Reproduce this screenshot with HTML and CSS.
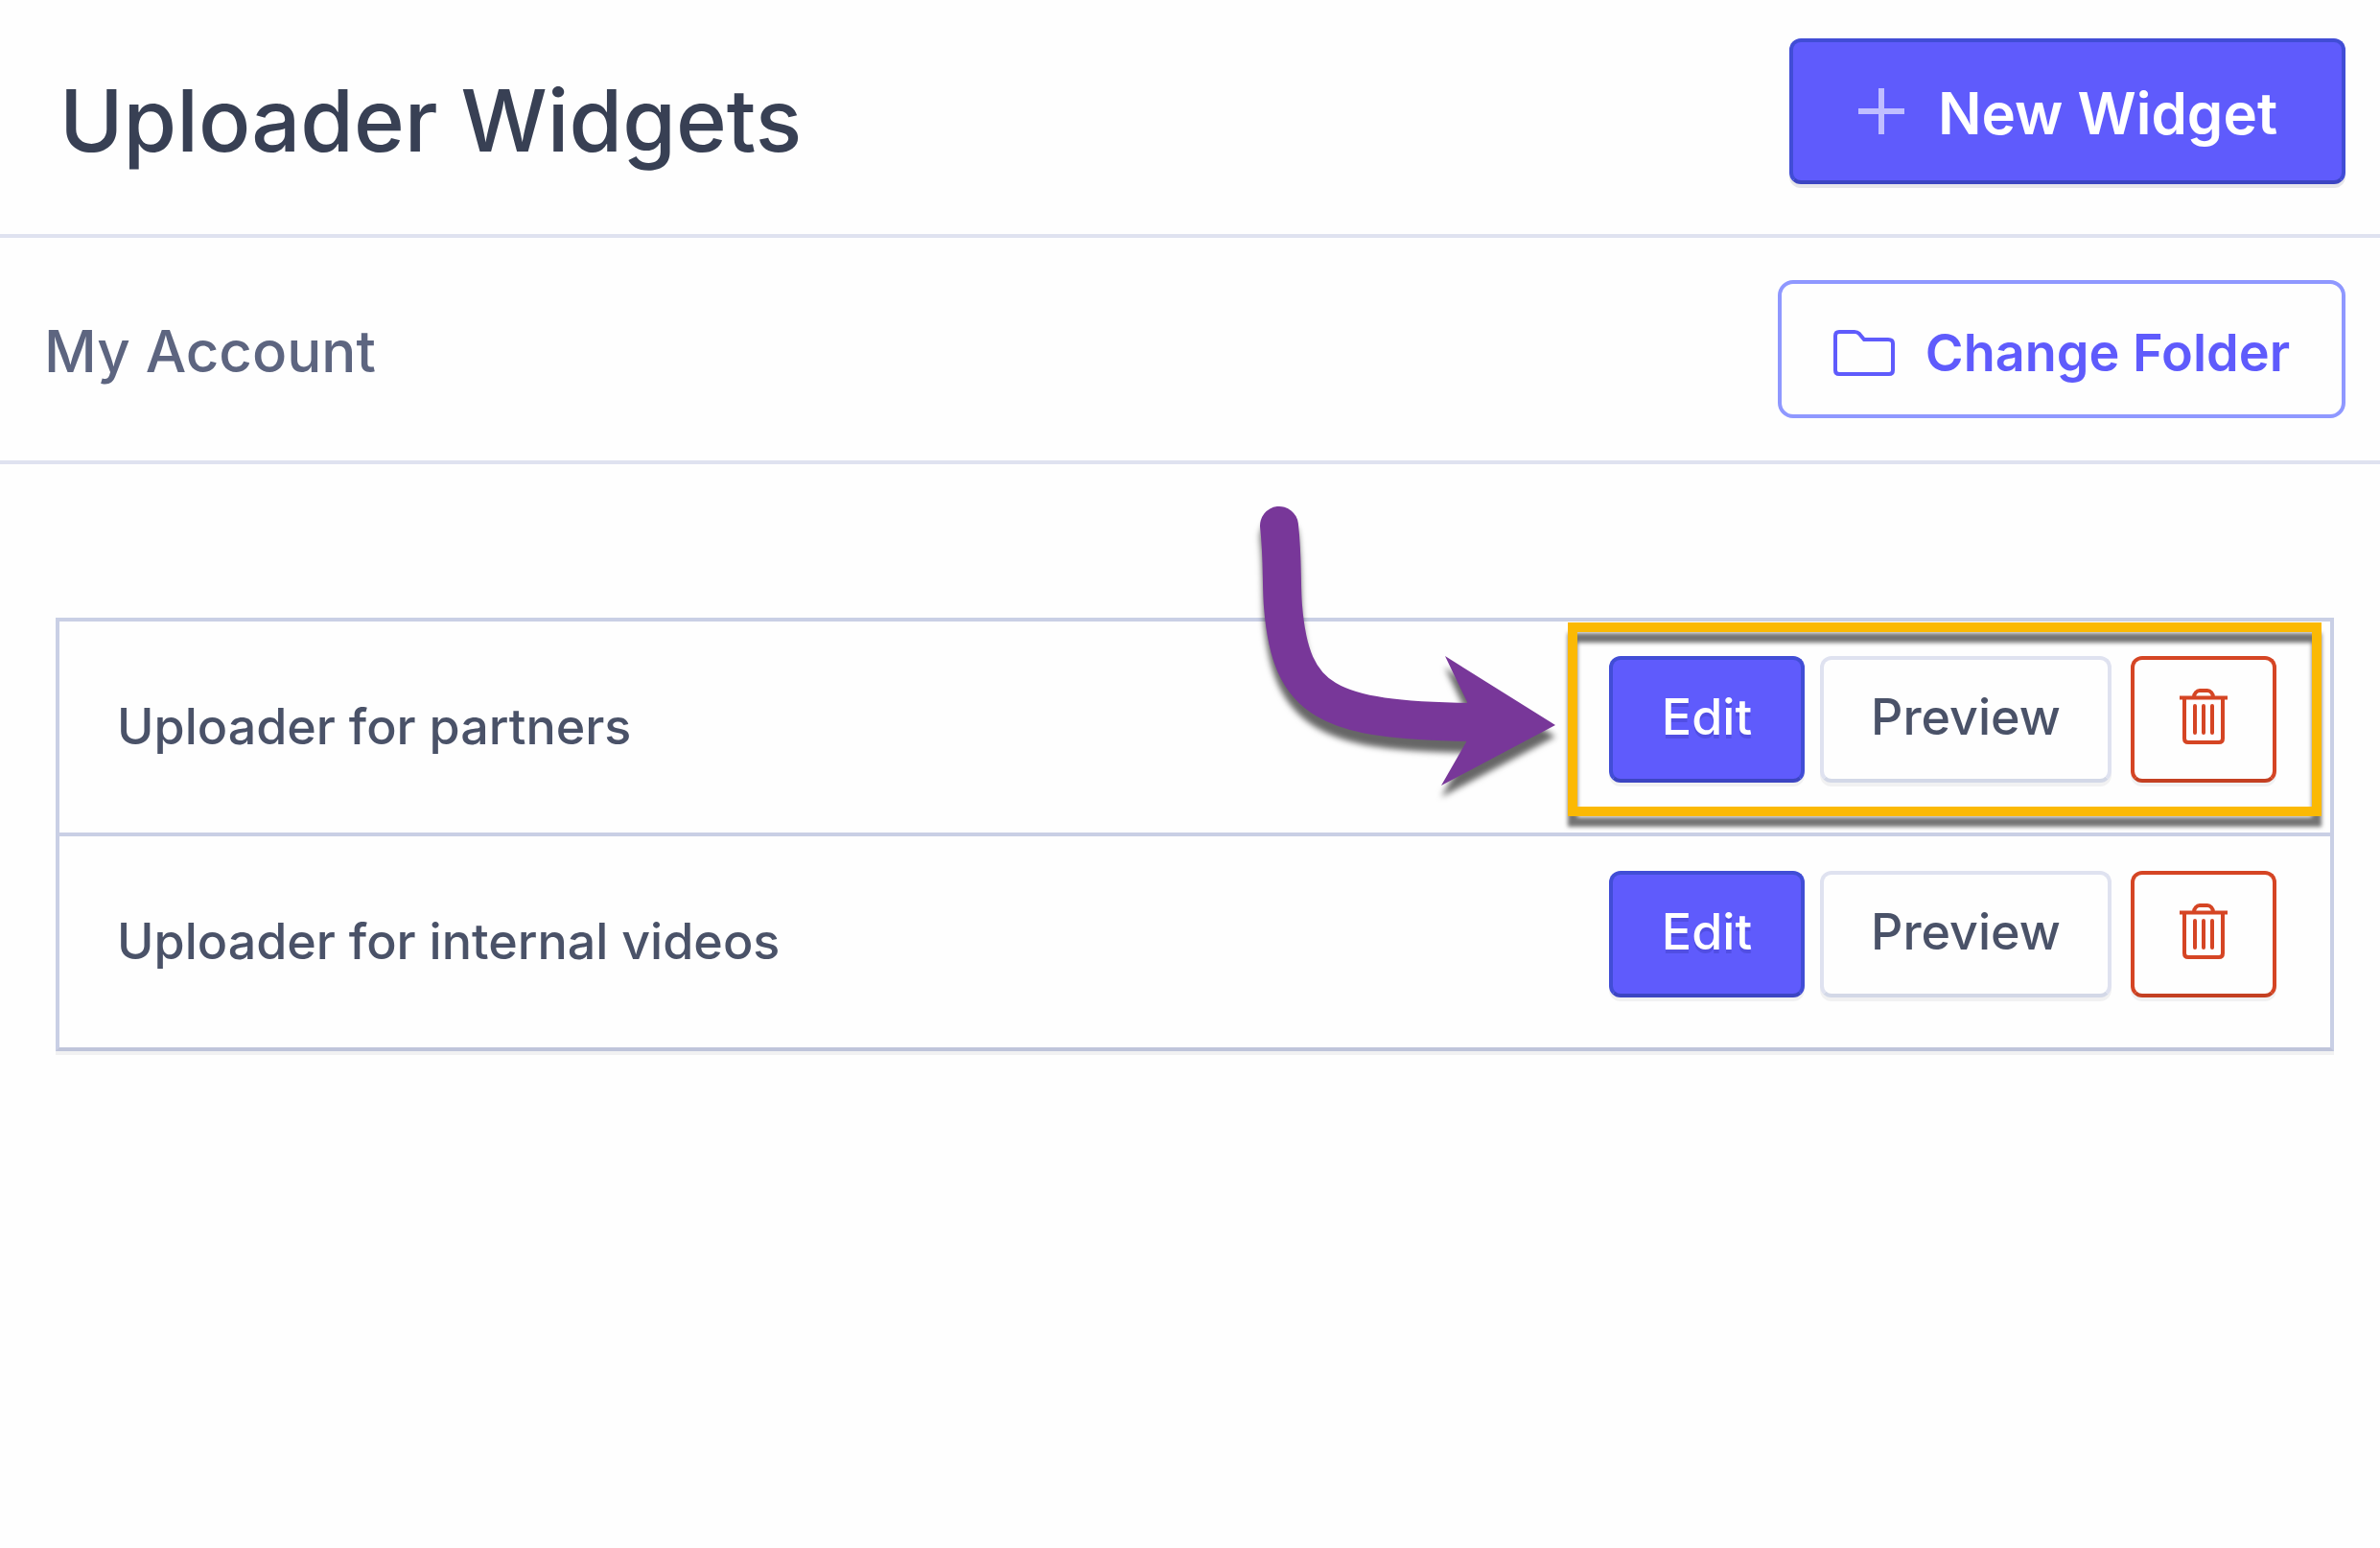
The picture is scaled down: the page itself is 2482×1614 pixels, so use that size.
FILE: index.html
```html
<!DOCTYPE html>
<html lang="en">
<head>
<meta charset="utf-8">
<title>Uploader Widgets</title>
<link rel="stylesheet" href="styles.css">
</head>
<body>
<svg class="symbols" aria-hidden="true">
  <symbol id="trash" viewBox="0 0 50 58">
    <g fill="none" stroke="currentColor" stroke-width="4">
      <path d="M0 9.500H50M15 9C15 5 18 2 21 2H29C32 2 35 5 35 9M5 9.500V52Q5 56 9 56H41Q45 56 45 52V9.500"/>
      <path stroke-linecap="round" d="M16 18V46M25 18V46M34 18V46"/>
    </g>
  </symbol>
</svg>
<header class="bar page-header">
  <h1 class="title">Uploader Widgets</h1>
  <button class="btn primary new-widget" type="button">
    <svg class="icon-plus" viewBox="0 0 50 50" aria-hidden="true"><path d="M25 1V49M1 25H49" fill="none" stroke="currentColor" stroke-width="6"/></svg>
    New Widget
  </button>
</header>
<section class="bar account">
  <h2 class="account-name">My Account</h2>
  <button class="btn change-folder" type="button">
    <svg class="icon-folder" viewBox="0 0 64 48" aria-hidden="true"><path d="M6 2H22Q25 2 27 4L32 10H57Q62 10 62 14V42Q62 46 58 46H6Q2 46 2 42V6Q2 2 6 2Z" fill="none" stroke="currentColor" stroke-width="4"/></svg>
    Change Folder
  </button>
</section>
<main class="content">
  <ul class="widgets">
    <li class="widget">
      <span class="name">Uploader for partners</span>
      <div class="actions">
        <button class="btn primary edit" type="button">Edit</button>
        <button class="btn preview" type="button">Preview</button>
        <button class="btn danger" type="button" aria-label="Delete Uploader for partners"><svg class="icon-trash" aria-hidden="true"><use href="#trash"/></svg></button>
        <div class="highlight"></div>
        <svg class="arrow" viewBox="0 0 400 360" aria-hidden="true">
          <path d="M54 48C58 84 56 108 58 132C66 232 104 251 254 253" fill="none" stroke="#783799" stroke-width="40" stroke-linecap="round"/>
          <path d="M227 184L342 256L223 319L250 272V232Z" fill="#783799"/>
        </svg>
      </div>
    </li>
    <li class="widget">
      <span class="name">Uploader for internal videos</span>
      <div class="actions">
        <button class="btn primary edit" type="button">Edit</button>
        <button class="btn preview" type="button">Preview</button>
        <button class="btn danger" type="button" aria-label="Delete Uploader for internal videos"><svg class="icon-trash" aria-hidden="true"><use href="#trash"/></svg></button>
      </div>
    </li>
  </ul>
</main>
</body>
</html>
```
FILE: styles.css
```css
* { box-sizing: border-box; }
body {
  margin: 0;
  background: #fefefe;
  color: #4a5268;
  font-family: Inter, "Liberation Sans", sans-serif;
  font-weight: 500;
}
.symbols { display: block; width: 0; height: 0; }
.bar {
  display: flex;
  align-items: center;
  justify-content: space-between;
  border-bottom: 4px solid #dfe2f0;
}
.page-header { padding: 40px 36px 52px 62px; }
.account { padding: 44px 36px 44px 46px; }
.title { margin: 0; padding-top: 20px; font-size: 90px; line-height: 112px; font-weight: 500; color: #384054; }
.account-name { margin: 0; padding-top: 4px; font-size: 60px; line-height: 72px; font-weight: 500; color: #5d6580; }
.btn {
  display: flex;
  align-items: center;
  justify-content: center;
  border: 4px solid #dfe2f0;
  border-bottom-color: #d3d8e7;
  border-radius: 12px;
  background: #fefefe;
  color: #4a5268;
  font: inherit;
  font-size: 52px;
  line-height: 64px;
  white-space: nowrap;
  box-shadow: 0 4px 0 #f1f1f2;
}
.primary {
  background: #5f5bfc;
  border-color: #414dd6;
  border-bottom-color: #3c45c2;
  color: #fff;
  text-shadow: 0 4px 0 rgba(60, 60, 190, .4);
}
.new-widget {
  width: 580px;
  height: 152px;
  padding: 4px 0 0;
  gap: 34px;
  font-size: 60px;
  font-weight: 600;
  text-shadow: none;
  box-shadow: 0 4px 0 #e6e6ea;
}
.icon-plus { width: 50px; height: 50px; color: #c0beff; margin-bottom: 4px; }
.change-folder {
  width: 592px;
  height: 144px;
  padding: 8px 0 0;
  gap: 32px;
  border-color: #8f98ff;
  border-radius: 16px;
  color: #5f5bfc;
  font-size: 54px;
  font-weight: 600;
  box-shadow: none;
}
.icon-folder { width: 64px; height: 48px; }
.content { padding: 160px 48px 64px 58px; }
.widgets {
  margin: 0;
  padding: 0;
  list-style: none;
  border: 4px solid #c9cfe5;
  border-bottom-color: #bfc4da;
  box-shadow: 0 4px 0 #f1f1f2;
}
.widget {
  display: flex;
  align-items: center;
  justify-content: space-between;
  padding: 36px 56px 52px 60px;
}
.widget + .widget { border-top: 4px solid #c9cfe5; }
.name { font-size: 52px; line-height: 64px; padding-top: 16px; }
.actions { position: relative; display: flex; }
.actions .btn { height: 132px; padding: 0 0 4px; }
.edit { width: 204px; }
.preview { width: 304px; margin-left: 16px; }
.actions .danger {
  width: 152px;
  margin-left: 20px;
  padding: 0 0 6px;
  border-color: #d54524;
  border-bottom-color: #c44022;
  color: #d54524;
}
.icon-trash { width: 50px; height: 58px; }
.highlight {
  position: absolute;
  inset: -35px -47px -35px -43px;
  border: 10px solid #fbb904;
  filter: drop-shadow(0 11px 2px rgba(0, 0, 0, .55));
  pointer-events: none;
}
.arrow {
  position: absolute;
  top: -184px;
  left: -398px;
  width: 400px;
  height: 360px;
  filter: drop-shadow(0 12px 3px rgba(0, 0, 0, .6));
  pointer-events: none;
}
```
